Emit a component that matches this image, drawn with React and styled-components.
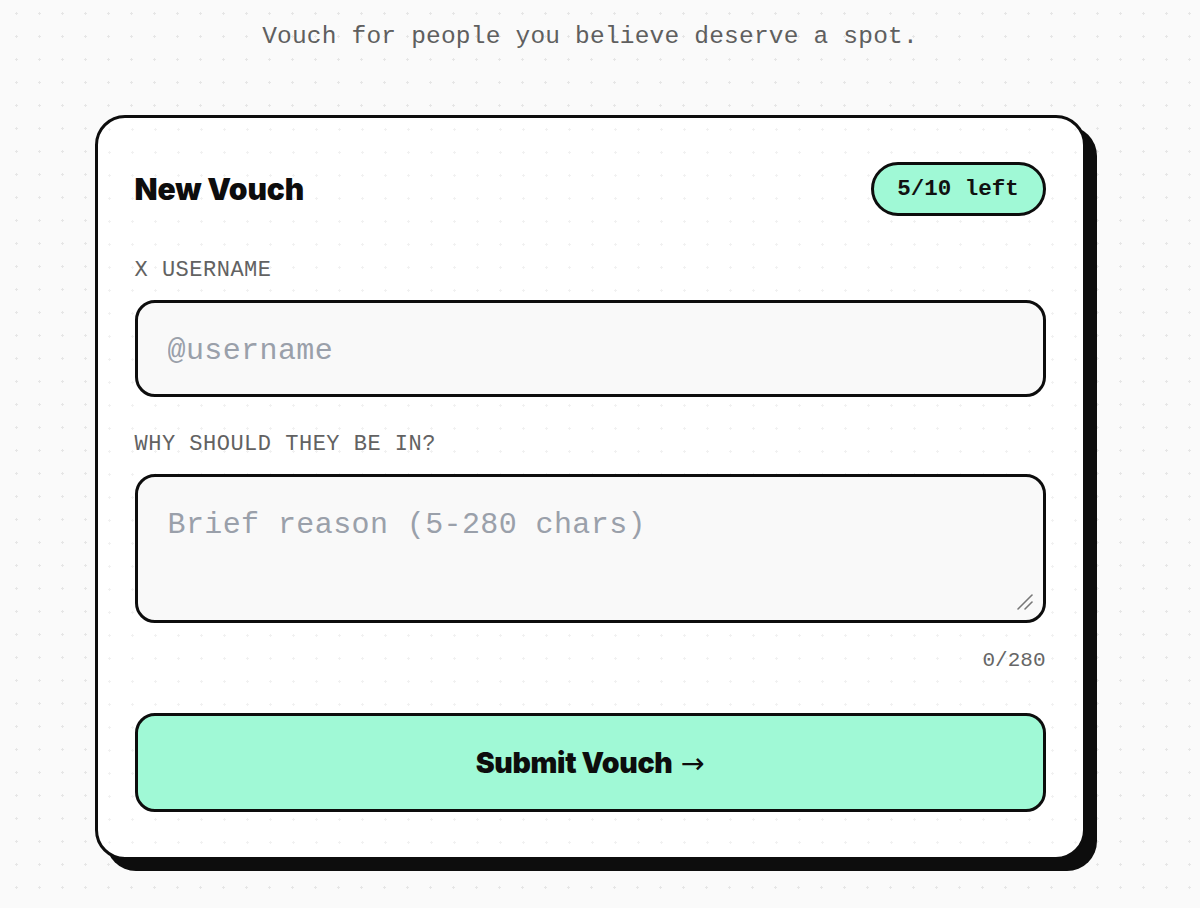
import React from "react";
import styled, { createGlobalStyle } from "styled-components";

const Global = createGlobalStyle`
  html, body {
    margin: 0;
    padding: 0;
    background-color: #fafafa;
    background-image: radial-gradient(circle, #e6e6e6 1px, transparent 1.2px);
    background-size: 23px 23px;
    background-position: 5px 2px;
  }
  * { box-sizing: border-box; }
`;

const mono = `"Liberation Mono", "DejaVu Sans Mono", monospace`;
const display = `Inter, "Noto Sans", sans-serif`;

const Page = styled.div`
  width: 1180px;
  padding-top: 21px;
  display: flex;
  flex-direction: column;
  align-items: center;
  min-height: 908px;
`;

const Subtitle = styled.p`
  margin: 0;
  font-family: ${mono};
  font-size: 24.5px;
  letter-spacing: 0.2px;
  line-height: 32px;
  color: #5f5f5f;
`;

const Card = styled.form`
  margin-top: 62px;
  width: 991px;
  border: 3px solid #0d0d0d;
  border-radius: 30px;
  background-color: #ffffff;
  background-image: radial-gradient(circle, #f1f1f1 1px, transparent 1.2px);
  background-size: 23px 23px;
  box-shadow: 11px 11px 0 #0d0d0d;
  padding: 44px 37px 45px;
  display: flex;
  flex-direction: column;
`;

const Header = styled.div`
  display: flex;
  align-items: center;
  justify-content: space-between;
  height: 54px;
  margin-bottom: 42px;
`;

const Title = styled.h2`
  margin: 0;
  font-family: ${display};
  font-weight: 900;
  font-size: 30px;
  letter-spacing: -0.15px;
  color: #0d0d0d;
`;

const Badge = styled.span`
  display: inline-flex;
  align-items: center;
  justify-content: center;
  width: 175px;
  height: 54px;
  border: 3px solid #0d0d0d;
  border-radius: 999px;
  background: #a0f9d6;
  font-family: ${mono};
  font-weight: 700;
  font-size: 22.5px;
  color: #111;
`;

const Label = styled.label`
  display: block;
  font-family: ${mono};
  font-size: 22px;
  letter-spacing: 0.5px;
  line-height: 26px;
  color: #626262;
  margin-bottom: 16px;
`;

const fieldBase = `
  width: 100%;
  border: 3px solid #0d0d0d;
  border-radius: 20px;
  background: #f9f9f9;
  font-family: ${mono};
  font-size: 30px;
  letter-spacing: 0.4px;
  color: #111;
  outline: none;
  &::placeholder { color: #9aa0aa; }
`;

const Input = styled.input`
  ${fieldBase}
  height: 97px;
  padding: 4px 30px 0;
`;

const TextWrap = styled.div`
  position: relative;
  height: 149px;
`;

const TextArea = styled.textarea`
  ${fieldBase}
  display: block;
  height: 149px;
  padding: 28px 30px;
  line-height: 40px;
  resize: none;
`;

const Grip = styled.svg`
  position: absolute;
  right: 12px;
  bottom: 12px;
  width: 18px;
  height: 18px;
  pointer-events: none;
`;

const FieldGroup = styled.div`
  margin-bottom: ${(p) => p.$mb || 0}px;
`;

const Counter = styled.div`
  text-align: right;
  font-family: ${mono};
  font-size: 21px;
  line-height: 26px;
  color: #666;
  margin-top: 25px;
  margin-bottom: 39px;
`;

const Submit = styled.button`
  height: 99px;
  width: 100%;
  border: 3px solid #0d0d0d;
  border-radius: 20px;
  background: #a0f9d6;
  font-family: ${display};
  font-weight: 900;
  font-size: 28.5px;
  letter-spacing: -0.35px;
  color: #0d0d0d;
  cursor: pointer;
`;

const Arrow = styled.span`
  font-family: "DejaVu Sans", sans-serif;
  font-weight: 400;
  letter-spacing: 0;
  margin-left: 8px;
`;

export default function App() {
  return (
    <>
      <Global />
      <Page>
        <Subtitle>Vouch for people you believe deserve a spot.</Subtitle>
        <Card onSubmit={(e) => e.preventDefault()}>
          <Header>
            <Title>New Vouch</Title>
            <Badge>5/10 left</Badge>
          </Header>
          <FieldGroup $mb={35}>
            <Label>X USERNAME</Label>
            <Input placeholder="@username" />
          </FieldGroup>
          <FieldGroup>
            <Label>WHY SHOULD THEY BE IN?</Label>
            <TextWrap>
              <TextArea placeholder="Brief reason (5-280 chars)" />
              <Grip viewBox="0 0 18 18">
                <line x1="2" y1="16" x2="16" y2="2" stroke="#777" strokeWidth="1.6" strokeLinecap="round" />
                <line x1="9" y1="16" x2="16" y2="9" stroke="#777" strokeWidth="1.6" strokeLinecap="round" />
              </Grip>
            </TextWrap>
          </FieldGroup>
          <Counter>0/280</Counter>
          <Submit type="submit">
            Submit Vouch<Arrow>→</Arrow>
          </Submit>
        </Card>
      </Page>
    </>
  );
}
